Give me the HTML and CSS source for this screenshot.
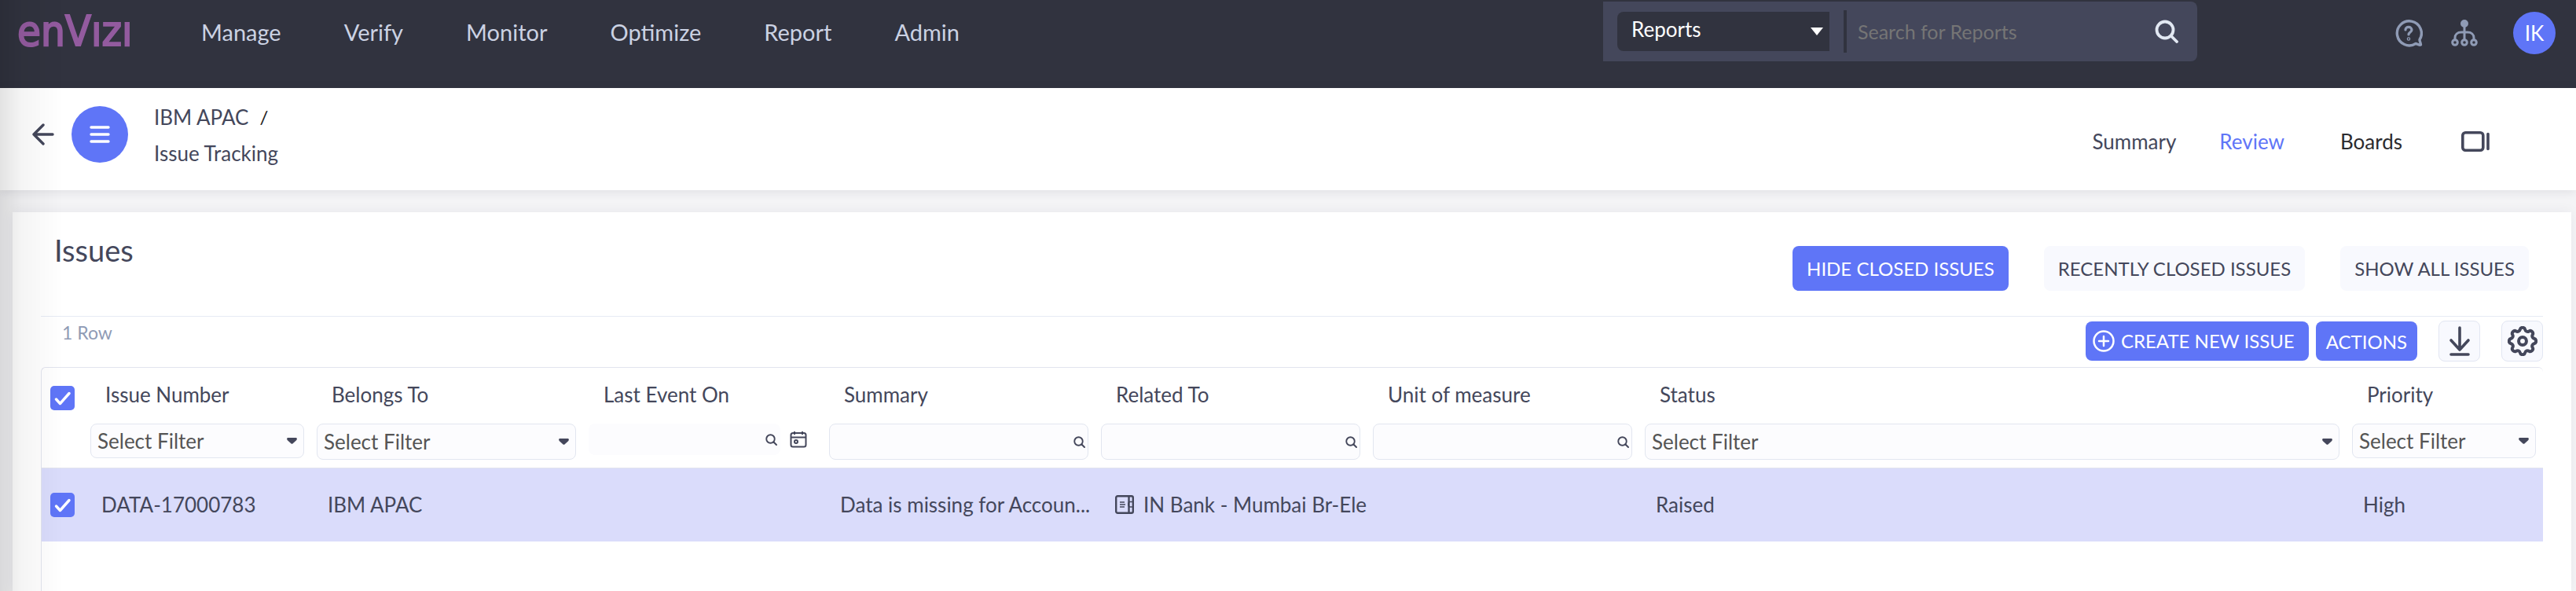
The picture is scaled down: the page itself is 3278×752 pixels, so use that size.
FILE: index.html
```html
<!DOCTYPE html>
<html lang="en">
<head>
<meta charset="utf-8">
<title>Issue Tracking</title>
<link rel="stylesheet" href="styles.css">
</head>
<body>
<svg class="sprite" aria-hidden="true">
  <symbol id="caret" viewBox="0 0 16 10"><path d="M1 0h14q2 2 0 4L9.500 9q-1.500 1.500-3 0L1 4q-2-2 0-4z" fill="currentColor"/></symbol>
  <symbol id="lens" viewBox="0 0 30 30"><g fill="none" stroke="currentColor" stroke-width="3.800" stroke-linecap="round"><circle cx="13" cy="13" r="10.500"/><path d="M21 21l7 7"/></g></symbol>
  <symbol id="tick" viewBox="0 0 31 31"><path d="M7.500 17l5 5.500L24 9.500" fill="none" stroke="#fff" stroke-width="3.400" stroke-linecap="round" stroke-linejoin="round"/></symbol>
</svg>

<header class="topbar">
  <a class="logo" href="#">enVızı</a>
  <nav class="menu">
    <a href="#">Manage</a><a href="#">Verify</a><a href="#">Monitor</a><a href="#">Optimize</a><a href="#">Report</a><a href="#">Admin</a>
  </nav>
  <form class="search">
    <div class="overlay scope">
      <select aria-label="Search scope"><option>Reports</option></select>
      <svg class="scope-caret" viewBox="0 0 16 10"><path d="M0 0h16L8 10z" fill="currentColor"/></svg>
    </div>
    <input class="search-text" type="text" placeholder="Search for Reports" aria-label="Search for Reports">
    <button class="search-go" type="button" aria-label="Search"><svg><use href="#lens"/></svg></button>
  </form>
  <div class="tools">
    <button class="tool" type="button" aria-label="Help">
      <svg viewBox="0 0 36 36" fill="none" stroke="currentColor" stroke-width="3.400" stroke-linecap="round" stroke-linejoin="round"><path d="M27 31.500a15.500 15.500 0 1 1 5-5c0 2.500 1.500 4 1.500 6.500-3 1-4.500-1.500-6.500-1.500z"/><path d="M14 14c0-5 8-4.500 8 0 0 3-4 3-4 6" stroke-width="3.200"/><circle cx="18" cy="25.500" r=".6"/></svg>
    </button>
    <button class="tool" type="button" aria-label="Hierarchy">
      <svg viewBox="0 0 36 36" fill="none" stroke="currentColor" stroke-width="3"><circle cx="18" cy="6" r="4" fill="currentColor" stroke-width="2"/><path d="M18 8v18M6 26v-2c0-4 3-7 8-7h8c5 0 8 3 8 7v2"/><circle cx="6" cy="30" r="3.300"/><circle cx="18" cy="30" r="3.300"/><circle cx="30" cy="30" r="3.300"/></svg>
    </button>
    <button class="avatar" type="button">IK</button>
  </div>
</header>

<div class="subbar">
  <button class="back" type="button" aria-label="Back">
    <svg viewBox="0 0 28 28" fill="none" stroke="currentColor" stroke-width="3.400" stroke-linecap="round" stroke-linejoin="round"><path d="M26 14H2M14 2L2 14l12 12"/></svg>
  </button>
  <button class="burger" type="button" aria-label="Open menu">
    <svg viewBox="0 0 26 24" stroke="currentColor" stroke-width="3.400" stroke-linecap="round"><path d="M2 3h22M2 12h22M2 21h22"/></svg>
  </button>
  <div class="crumbs">
    <div class="crumb-line"><a href="#">IBM APAC</a><span class="slash">/</span></div>
    <div>Issue Tracking</div>
  </div>
  <nav class="tabs">
    <a href="#">Summary</a><a class="current" href="#">Review</a><a class="boards" href="#">Boards</a>
    <button class="panel-toggle" type="button" aria-label="Toggle side panel">
      <svg viewBox="0 0 36 26" fill="none" stroke="currentColor" stroke-width="3.600" stroke-linecap="round"><rect x="1.800" y="1.800" width="26" height="22.400" rx="3.500"/><path d="M34 3.500v19"/></svg>
    </button>
  </nav>
</div>

<main class="card">
  <div class="title-row">
    <h1>Issues</h1>
    <div class="scopes">
      <button class="btn primary" type="button">HIDE CLOSED ISSUES</button>
      <button class="btn" type="button">RECENTLY CLOSED ISSUES</button>
      <button class="btn" type="button">SHOW ALL ISSUES</button>
    </div>
  </div>
  <div class="grid-bar">
    <span class="count">1 Row</span>
    <div class="grid-actions">
      <button class="btn primary small create" type="button">
        <svg viewBox="0 0 28 28" fill="none" stroke="currentColor" stroke-width="2.500" stroke-linecap="round"><circle cx="14" cy="14" r="12.500"/><path d="M14 8v12M8 14h12"/></svg>CREATE NEW ISSUE</button>
      <button class="btn primary small" type="button">ACTIONS</button>
      <button class="square" type="button" aria-label="Download">
        <svg viewBox="0 0 36 38" fill="none" stroke="currentColor" stroke-width="3.600" stroke-linecap="round" stroke-linejoin="round"><path d="M18 2v28M7 18l11 12 11-12M7 36h22"/></svg>
      </button>
      <button class="square" type="button" aria-label="Settings">
        <svg viewBox="2 2 20 20" fill="none" stroke="currentColor" stroke-width="2.100" stroke-linejoin="round"><circle cx="12" cy="12" r="2.600"/><path d="M10.300 4.300c.4-1.800 3-1.800 3.400 0a1.700 1.700 0 0 0 2.600 1.100c1.500-.9 3.300.8 2.400 2.400a1.700 1.700 0 0 0 1 2.500c1.800.5 1.800 3 0 3.400a1.700 1.700 0 0 0-1 2.600c.9 1.500-.9 3.300-2.400 2.400a1.700 1.700 0 0 0-2.600 1c-.4 1.800-3 1.800-3.400 0a1.700 1.700 0 0 0-2.600-1c-1.500.9-3.300-.9-2.400-2.400a1.700 1.700 0 0 0-1-2.600c-1.800-.4-1.800-2.900 0-3.400a1.700 1.700 0 0 0 1-2.500c-.9-1.600.9-3.300 2.400-2.400 1 .6 2.300 0 2.600-1.100z"/></svg>
      </button>
    </div>
  </div>

  <div class="grid">
    <table>
      <colgroup><col class="c-check"><col class="c-id"><col class="c-text"><col class="c-date"><col class="c-text"><col class="c-text"><col class="c-text"><col><col class="c-priority"></colgroup>
      <thead>
        <tr class="heads">
          <th class="check"><label class="overlay box"><input type="checkbox" checked aria-label="Select all rows"><svg><use href="#tick"/></svg></label></th>
          <th>Issue Number</th><th>Belongs To</th><th>Last Event On</th><th>Summary</th><th>Related To</th><th>Unit of measure</th><th>Status</th><th>Priority</th>
        </tr>
        <tr class="filters">
          <td></td>
          <td><div class="overlay filter"><select class="short" aria-label="Filter issue number"><option>Select Filter</option></select><svg class="caret"><use href="#caret"/></svg></div></td>
          <td><div class="overlay filter"><select aria-label="Filter belongs to"><option>Select Filter</option></select><svg class="caret"><use href="#caret"/></svg></div></td>
          <td><div class="date-filter"><div class="overlay filter"><input class="plain" type="text" aria-label="Filter last event on"><svg class="lens"><use href="#lens"/></svg></div>
            <button class="calendar" type="button" aria-label="Pick a date"><svg viewBox="0 0 22 22" fill="none" stroke="currentColor" stroke-width="2"><rect x="1.500" y="3" width="19" height="17.500" rx="2.500"/><path d="M1.500 8.500h19M6 1v4M16 1v4"/><circle cx="8" cy="14" r="2"/></svg></button></div></td>
          <td><div class="overlay filter"><input type="text" aria-label="Filter summary"><svg class="lens"><use href="#lens"/></svg></div></td>
          <td><div class="overlay filter"><input type="text" aria-label="Filter related to"><svg class="lens"><use href="#lens"/></svg></div></td>
          <td><div class="overlay filter"><input type="text" aria-label="Filter unit of measure"><svg class="lens"><use href="#lens"/></svg></div></td>
          <td><div class="overlay filter"><select aria-label="Filter status"><option>Select Filter</option></select><svg class="caret"><use href="#caret"/></svg></div></td>
          <td><div class="overlay filter"><select class="short" aria-label="Filter priority"><option>Select Filter</option></select><svg class="caret"><use href="#caret"/></svg></div></td>
        </tr>
      </thead>
      <tbody>
        <tr>
          <td class="check"><label class="overlay box"><input type="checkbox" checked aria-label="Select DATA-17000783"><svg><use href="#tick"/></svg></label></td>
          <td>DATA-17000783</td><td>IBM APAC</td><td></td><td>Data is missing for Accoun...</td>
          <td><span class="related"><svg viewBox="0 0 24 24" fill="none" stroke="currentColor" stroke-width="2.400"><rect x="1.200" y="1.200" width="21.600" height="21.600" rx="2"/><path d="M17.500 1v22"/><path d="M6 9h6M6 12h7M6 15h6M23 8.500h-4c-3 0-3 6.500 0 6.500h4" stroke-width="1.600"/></svg>IN Bank - Mumbai Br-Ele</span></td>
          <td></td><td>Raised</td><td>High</td>
        </tr>
      </tbody>
    </table>
  </div>
</main>
<div class="edge-shade"></div>
</body>
</html>
```
FILE: styles.css
```css
* { box-sizing: border-box; }

body {
  margin: 0;
  min-height: 100vh;
  display: flex;
  flex-direction: column;
  background: #f4f4f6;
  color: #44475b;
  font: 26px/32px Lato, "Open Sans", sans-serif;
}

a { color: inherit; text-decoration: none; }
button, input, select { font: inherit; color: inherit; margin: 0; }
button { border: 0; padding: 0; background: none; cursor: pointer; }
svg { display: block; }
.sprite { display: none; }

/* Stacks a control and its icon in one cell */
.overlay { display: grid; align-items: center; }
.overlay > * { grid-area: 1 / 1; }
.overlay > svg { justify-self: end; pointer-events: none; }
select { appearance: none; }

/* Top bar */
.topbar {
  display: flex;
  align-items: center;
  padding: 2px 26px 34px 22px;
  background: #31333f;
  color: #cbd2e3;
}
.logo {
  width: 234px;
  font: 54px/76px "DejaVu Sans Condensed", "DejaVu Sans", sans-serif;
  color: #935b9f;
  -webkit-text-stroke: 2px #935b9f;
}
.menu { display: flex; gap: 80px; font-size: 29px; padding-top: 2px; }
.search {
  display: flex;
  align-items: center;
  width: 756px;
  height: 76px;
  margin-left: auto;
  padding: 0 24px 0 18px;
  background: #44475b;
  border-radius: 0 8px 8px 0;
}
.scope { width: 270px; color: #fff; margin-right: 18px; }
.scope select {
  height: 50px;
  padding: 0 18px 6px;
  border: 0;
  border-radius: 8px 0 0 8px;
  background: #31333f;
}
.scope-caret { width: 16px; height: 10px; margin-right: 8px; }
.search-text {
  flex: 1;
  min-width: 0;
  height: 54px;
  padding: 0 14px;
  border: 0;
  border-left: 4px solid #31333f;
  background: none;
  font-size: 25px;
}
.search-text::placeholder { color: #757575; opacity: 1; }
.search-go { color: #e2e8f2; }
.search-go svg { width: 30px; height: 30px; }
.tools { display: flex; align-items: center; margin-left: 251px; padding-top: 4px; color: #8f9bb5; }
.tool { margin-right: 35px; }
.tool svg { width: 36px; height: 36px; }
.avatar {
  width: 54px;
  height: 54px;
  margin-left: 9px;
  border-radius: 50%;
  background: #5f75f7;
  color: #fff;
}

/* Breadcrumb bar */
.subbar {
  display: flex;
  align-items: center;
  height: 130px;
  padding: 0 110px 12px 41px;
  background: #fff;
  box-shadow: 0 2px 12px rgba(40, 40, 60, .1);
}
.back svg { width: 28px; height: 28px; }
.burger {
  display: grid;
  place-items: center;
  width: 72px;
  height: 72px;
  margin: 0 33px 0 22px;
  border-radius: 50%;
  background: #5f75f7;
  color: #fff;
}
.burger svg { width: 26px; height: 24px; }
.crumbs { display: grid; gap: 14px; padding-top: 2px; }
.crumb-line { display: flex; gap: 14px; }
.slash { color: #222; font-size: 24px; }
.tabs { display: flex; align-items: center; margin-left: auto; padding-top: 18px; }
.tabs a { margin-right: 55px; }
.tabs .current { color: #5f75f7; margin-right: 71px; }
.tabs .boards { color: #2b2b2e; margin-right: 75px; }
.panel-toggle svg { width: 36px; height: 26px; }

/* Issues card */
.card {
  flex: 1;
  display: flex;
  flex-direction: column;
  margin: 28px 6px 0 16px;
  padding: 0 36px;
  background: #fff;
  box-shadow: 0 0 16px rgba(40, 40, 60, .06);
}
.title-row {
  display: flex;
  justify-content: space-between;
  align-items: flex-start;
  height: 132px;
  padding: 26px 18px 0 17px;
}
h1 { margin: 0; font-size: 38px; line-height: 44px; font-weight: 400; }
.scopes { display: flex; gap: 45px; padding-top: 17px; }
.btn {
  height: 57px;
  padding: 0 18px;
  border-radius: 8px;
  background: #f8f9fe;
  font-size: 24px;
}
.btn.primary { background: #5f75f7; color: #fff; }
.btn.small { height: 50px; padding: 2px 13px 0; }
.grid-bar {
  display: flex;
  justify-content: space-between;
  align-items: flex-start;
  height: 65px;
  padding: 5px 0 0 27px;
  border-top: 1px solid #e6eaf4;
}
.count { color: #8f9bb5; font-size: 23px; line-height: 30px; }
.grid-actions { display: flex; align-items: center; gap: 27px; }
.btn.create { display: flex; align-items: center; gap: 8px; padding: 0 18px 0 9px; margin-right: -18px; }
.create svg { width: 28px; height: 28px; }
.square {
  display: grid;
  place-items: center;
  width: 53px;
  height: 52px;
  border: 1px solid #e2e6f2;
  border-radius: 8px;
  background: #f8f9fe;
}
.square svg { width: 38px; height: 38px; }

/* Data grid */
.grid {
  flex: 1;
  border: solid #e2e4ee;
  border-width: 1px 0 0 1px;
  border-radius: 6px 6px 0 0;
}
table { width: 100%; table-layout: fixed; border-collapse: collapse; }
.c-check { width: 55px; }
.c-id { width: 288px; }
.c-text { width: 346px; }
.c-date { width: 306px; }
.c-priority { width: 250px; }
th { height: 71px; padding: 0 0 4px 26px; font-weight: 400; text-align: left; vertical-align: middle; }
.check { padding: 0 0 0 11px; }
.heads .check { padding-top: 6px; }
.filters td { height: 56px; padding: 0 9px 0 7px; vertical-align: top; border-bottom: 1px solid #e2e4ee; }
tbody td { height: 94px; padding: 0 0 0 21px; white-space: nowrap; }
tbody tr { background: #dadcfb; }
tbody .check { padding-left: 11px; }
.box { width: 31px; height: 31px; }
.box input { appearance: none; width: 31px; height: 31px; border-radius: 5px; background: #5f75f7; }
.box svg { width: 31px; height: 31px; }
.filter { flex: 1; min-width: 0; }
.filter select, .filter input {
  width: 100%;
  min-width: 0;
  height: 46px;
  padding: 0 8px;
  border: 1px solid #e2e6f0;
  border-radius: 8px;
  background: #fcfcfe;
}
.filter select { color: #555; }
.filter .short { height: 44px; }
.filter .plain { height: 40px; border-color: transparent; }
.caret { width: 13px; height: 8px; margin-right: 9px; }
.lens { width: 15px; height: 15px; margin-right: 4px; }
.date-filter { display: flex; align-items: center; gap: 12px; padding-right: 12px; }
.calendar svg { width: 22px; height: 22px; }
.related { display: flex; align-items: center; gap: 12px; padding-left: 4px; }
.related svg { width: 24px; height: 24px; }

/* Soft shade along the left edge of the window */
.edge-shade {
  position: fixed;
  inset: 0 auto 0 0;
  width: 80px;
  background: linear-gradient(90deg, rgba(0, 0, 0, .11), rgba(0, 0, 0, .04) 35%, transparent);
  pointer-events: none;
}
```
